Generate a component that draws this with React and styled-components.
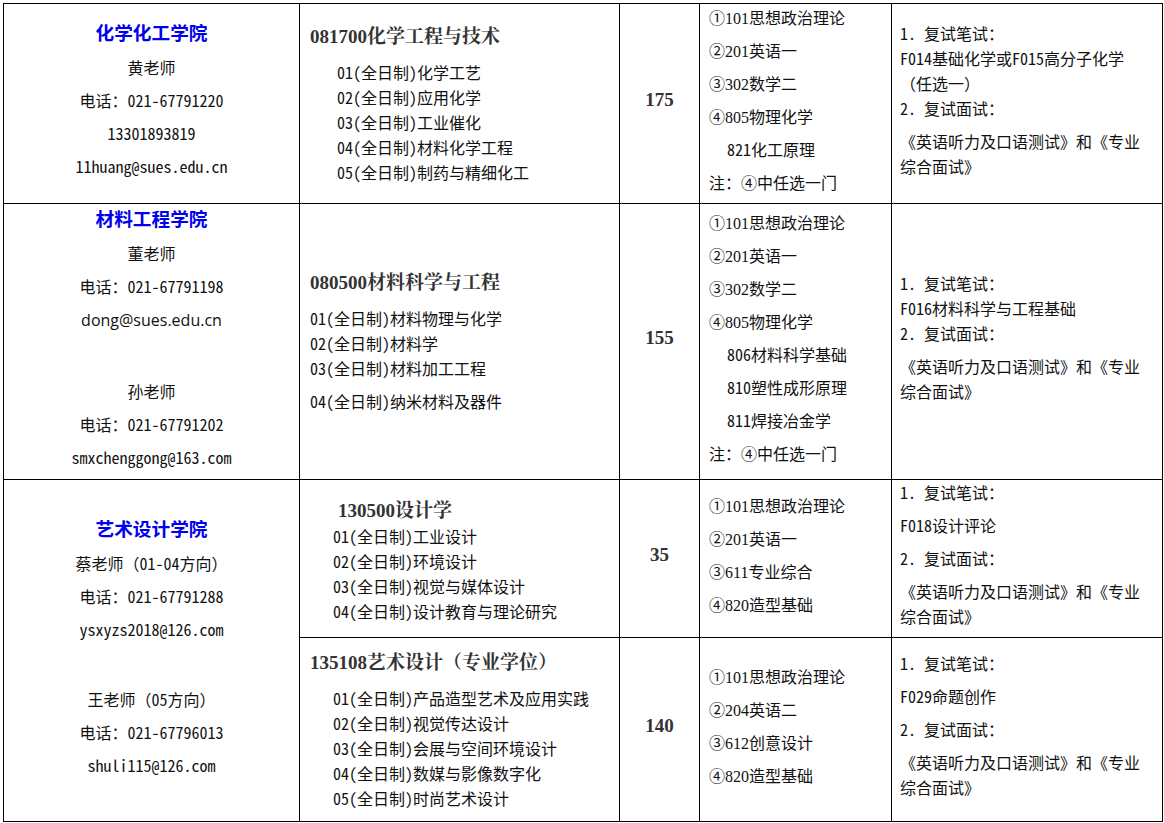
import React from 'react';
import styled, { createGlobalStyle } from 'styled-components';

const GlobalStyle = createGlobalStyle`
  html, body {
    margin: 0;
    padding: 0;
    background: #fff;
  }
  body {
    font-family: "Noto Sans Mono CJK SC", "Noto Sans CJK SC", sans-serif;
    font-size: 16px;
    color: #111;
  }
`;

const Page = styled.div`
  padding: 3px 0 0 3px;
`;

const Table = styled.table`
  border-collapse: collapse;
  table-layout: fixed;
  width: 1159px;
`;

const Col = styled.col`
  width: ${p => p.$w}px;
`;

const Row = styled.tr`
  height: ${p => p.$h}px;
`;

const Cell = styled.td`
  border: 1px solid #000;
  padding: 0 8px 0 ${p => p.$padLeft || 8}px;
  vertical-align: middle;
  text-align: ${p => p.$align || 'left'};
  overflow: hidden;
`;

const CollegeName = styled.div`
  font-family: "Noto Sans CJK SC", sans-serif;
  font-size: 18.67px;
  font-weight: 700;
  color: #0000ee;
  line-height: 27px;
  height: 27px;
  margin: -2px 0 10px;
`;

const Contact = styled.div`
  font-family: ${p =>
    p.$latin ? '"Open Sans", "Noto Sans", sans-serif' : 'inherit'};
  line-height: ${p => (p.$latin ? 27 : 25)}px;
  height: ${p => (p.$latin ? 27 : 25)}px;
  margin-bottom: 8px;
  white-space: nowrap;
`;

const Spacer = styled.div`
  height: 37px;
`;

const ProgramTitle = styled.div`
  font-family: "Liberation Serif", "Noto Serif CJK SC", "Noto Sans CJK SC", serif;
  font-size: 19px;
  font-weight: 700;
  color: #333;
  white-space: nowrap;
  line-height: ${p => (p.$tight ? 27 : 30)}px;
  height: ${p => (p.$tight ? 27 : 30)}px;
  margin: ${p => (p.$tight ? '11px 0 0' : '7px 0 8px')};
  padding-left: ${p => p.$indent || 0}px;
`;

const ItemList = styled.div`
  padding-left: ${p => p.$indent || 0}px;
  margin-bottom: 8px;
`;

const Item = styled.div`
  line-height: 25px;
  height: 25px;
  white-space: nowrap;
  margin-top: ${p => (p.$spaced ? 8 : 0)}px;
`;

const Quota = styled.div`
  font-family: "Liberation Serif", serif;
  font-size: 19px;
  font-weight: 700;
  color: #333;
  line-height: 25px;
  margin-bottom: 8px;
`;

const ExamLine = styled.div`
  line-height: 25px;
  height: 25px;
  margin-bottom: 8px;
  white-space: nowrap;
  padding-left: ${p => (p.$sub ? 18 : 0)}px;
`;

const Code = styled.span`
  font-family: "Liberation Serif", serif;
  line-height: 1;
`;

const RetestLine = styled.div`
  line-height: 25px;
  margin-bottom: ${p => (p.$gap ? 8 : 0)}px;
`;

const INTERVIEW = '《英语听力及口语测试》和《专业综合面试》';

const colleges = [
  {
    name: '化学化工学院',
    contacts: [
      '黄老师',
      '电话：021-67791220',
      '13301893819',
      '11huang@sues.edu.cn',
    ],
    programs: [
      {
        height: 200,
        title: '081700化学工程与技术',
        indent: 27,
        items: [
          '01(全日制)化学工艺',
          '02(全日制)应用化学',
          '03(全日制)工业催化',
          '04(全日制)材料化学工程',
          '05(全日制)制药与精细化工',
        ],
        quota: 175,
        exams: [
          { mark: '①', code: '101', name: '思想政治理论' },
          { mark: '②', code: '201', name: '英语一' },
          { mark: '③', code: '302', name: '数学二' },
          { mark: '④', code: '805', name: '物理化学' },
          { sub: true, text: '821化工原理' },
          { text: '注：④中任选一门' },
        ],
        retest: [
          { text: '1. 复试笔试：' },
          { text: 'F014基础化学或F015高分子化学（任选一）' },
          { text: '2. 复试面试：', gap: true },
          { text: INTERVIEW, gap: true },
        ],
      },
    ],
  },
  {
    name: '材料工程学院',
    contacts: [
      '董老师',
      '电话：021-67791198',
      { text: 'dong@sues.edu.cn', latin: true },
      null,
      '孙老师',
      '电话：021-67791202',
      'smxchenggong@163.com',
    ],
    programs: [
      {
        height: 276,
        title: '080500材料科学与工程',
        indent: 0,
        items: [
          '01(全日制)材料物理与化学',
          '02(全日制)材料学',
          '03(全日制)材料加工工程',
          { text: '04(全日制)纳米材料及器件', spaced: true },
        ],
        quota: 155,
        exams: [
          { mark: '①', code: '101', name: '思想政治理论' },
          { mark: '②', code: '201', name: '英语一' },
          { mark: '③', code: '302', name: '数学二' },
          { mark: '④', code: '805', name: '物理化学' },
          { sub: true, text: '806材料科学基础' },
          { sub: true, text: '810塑性成形原理' },
          { sub: true, text: '811焊接冶金学' },
          { text: '注：④中任选一门' },
        ],
        retest: [
          { text: '1. 复试笔试：' },
          { text: 'F016材料科学与工程基础' },
          { text: '2. 复试面试：', gap: true },
          { text: INTERVIEW, gap: true },
        ],
      },
    ],
  },
  {
    name: '艺术设计学院',
    contacts: [
      '蔡老师（01-04方向）',
      '电话：021-67791288',
      'ysxyzs2018@126.com',
      null,
      '王老师（05方向）',
      '电话：021-67796013',
      'shuli115@126.com',
    ],
    programs: [
      {
        height: 158,
        title: '130500设计学',
        titleIndent: 28,
        tight: true,
        indent: 23,
        items: [
          '01(全日制)工业设计',
          '02(全日制)环境设计',
          '03(全日制)视觉与媒体设计',
          '04(全日制)设计教育与理论研究',
        ],
        quota: 35,
        exams: [
          { mark: '①', code: '101', name: '思想政治理论' },
          { mark: '②', code: '201', name: '英语一' },
          { mark: '③', code: '611', name: '专业综合' },
          { mark: '④', code: '820', name: '造型基础' },
        ],
        retest: [
          { text: '1. 复试笔试：', gap: true },
          { text: 'F018设计评论', gap: true },
          { text: '2. 复试面试：', gap: true },
          { text: INTERVIEW, gap: true },
        ],
      },
      {
        height: 184,
        title: '135108艺术设计（专业学位）',
        indent: 23,
        items: [
          '01(全日制)产品造型艺术及应用实践',
          '02(全日制)视觉传达设计',
          '03(全日制)会展与空间环境设计',
          '04(全日制)数媒与影像数字化',
          '05(全日制)时尚艺术设计',
        ],
        quota: 140,
        exams: [
          { mark: '①', code: '101', name: '思想政治理论' },
          { mark: '②', code: '204', name: '英语二' },
          { mark: '③', code: '612', name: '创意设计' },
          { mark: '④', code: '820', name: '造型基础' },
        ],
        retest: [
          { text: '1. 复试笔试：', gap: true },
          { text: 'F029命题创作', gap: true },
          { text: '2. 复试面试：', gap: true },
          { text: INTERVIEW, gap: true },
        ],
      },
    ],
  },
];

const CollegeCell = ({ college, rowSpan }) => (
  <Cell $align="center" rowSpan={rowSpan}>
    <CollegeName>{college.name}</CollegeName>
    {college.contacts.map((c, i) => {
      if (c === null) return <Spacer key={i} />;
      if (typeof c === 'string') return <Contact key={i}>{c}</Contact>;
      return (
        <Contact key={i} $latin={c.latin}>
          {c.text}
        </Contact>
      );
    })}
  </Cell>
);

const ProgramCell = ({ program }) => (
  <Cell $padLeft={10}>
    <ProgramTitle $tight={program.tight} $indent={program.titleIndent}>
      {program.title}
    </ProgramTitle>
    <ItemList $indent={program.indent}>
      {program.items.map(item =>
        typeof item === 'string' ? (
          <Item key={item}>{item}</Item>
        ) : (
          <Item key={item.text} $spaced={item.spaced}>
            {item.text}
          </Item>
        ),
      )}
    </ItemList>
  </Cell>
);

const ExamCell = ({ exams }) => (
  <Cell $padLeft={9}>
    {exams.map((e, i) =>
      e.mark ? (
        <ExamLine key={i}>
          {e.mark}
          <Code>{e.code}</Code>
          {e.name}
        </ExamLine>
      ) : (
        <ExamLine key={i} $sub={e.sub}>
          {e.text}
        </ExamLine>
      ),
    )}
  </Cell>
);

const RetestCell = ({ retest }) => (
  <Cell>
    {retest.map((r, i) => (
      <RetestLine key={i} $gap={r.gap}>
        {r.text}
      </RetestLine>
    ))}
  </Cell>
);

const App = () => (
  <Page>
    <GlobalStyle />
    <Table>
      <colgroup>
        <Col $w={296} />
        <Col $w={320} />
        <Col $w={80} />
        <Col $w={192} />
        <Col $w={271} />
      </colgroup>
      <tbody>
        {colleges.map(college =>
          college.programs.map((program, i) => (
            <Row key={program.title} $h={program.height}>
              {i === 0 && (
                <CollegeCell college={college} rowSpan={college.programs.length} />
              )}
              <ProgramCell program={program} />
              <Cell $align="center">
                <Quota>{program.quota}</Quota>
              </Cell>
              <ExamCell exams={program.exams} />
              <RetestCell retest={program.retest} />
            </Row>
          )),
        )}
      </tbody>
    </Table>
  </Page>
);

export default App;
